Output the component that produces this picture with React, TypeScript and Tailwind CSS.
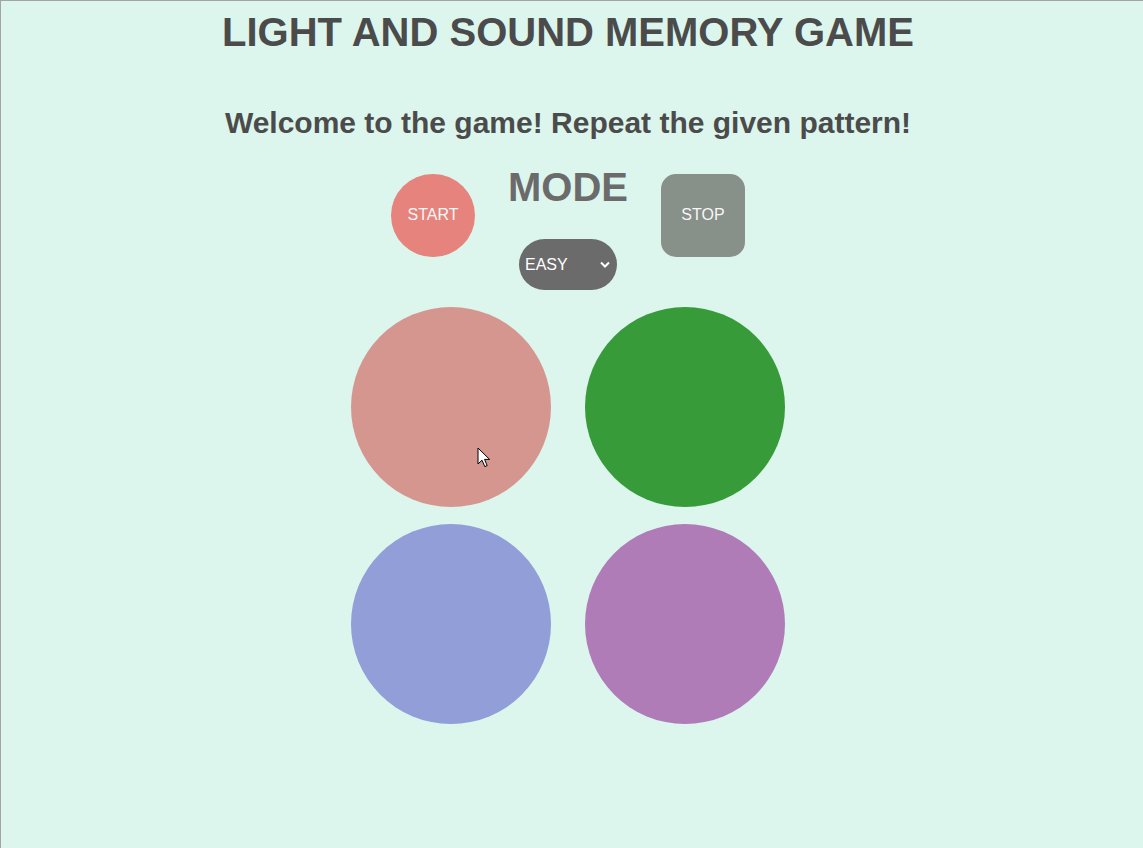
import { useState } from "react";

const pads = [
  { id: 1, color: "bg-[#d69690]" },
  { id: 2, color: "bg-[#379b3a]" },
  { id: 3, color: "bg-[#919ed7]" },
  { id: 4, color: "bg-[#b07cb8]" },
];

function Cursor() {
  return (
    <svg
      className="pointer-events-none absolute left-[476px] top-[446px]"
      width="14"
      height="22"
      viewBox="0 0 14 22"
    >
      <path
        d="M1 1 L1 17 L5 13.2 L7.8 19.6 L10.2 18.6 L7.5 12.4 L12.6 12.4 Z"
        fill="#ffffff"
        stroke="#000000"
        strokeWidth="1"
        strokeLinejoin="round"
      />
    </svg>
  );
}

export default function App() {
  const [mode, setMode] = useState("easy");

  return (
    <div className="relative min-h-[848px] border-l border-t border-[#a3a3a3] bg-[#dcf6ed] font-['Liberation_Sans',Arial,sans-serif]">
      <div className="flex w-[1134px] flex-col items-center pt-2 text-center">
        <h1 className="text-[40px] font-bold leading-[46px] text-[#4b4b4b]">
          LIGHT AND SOUND MEMORY GAME
        </h1>
        <p className="mt-[51px] text-[30px] font-bold leading-[34px] text-[#4b4b4b]">
          Welcome to the game! Repeat the given pattern!
        </p>

        {/* controls */}
        <div className="mt-[24px] flex items-start justify-center gap-[34px]">
          <button className="mt-[10px] flex h-[83px] w-[84px] items-center justify-center rounded-full bg-[#e6837d] pb-[2px] text-base text-[#f7f7f7]">
            START
          </button>
          <div className="flex w-[118px] flex-col items-center">
            <h2 className="text-[40px] font-bold leading-[46px] text-[#6b6b6b]">
              MODE
            </h2>
            <div className="relative mt-[29px]">
              <select
                value={mode}
                onChange={(e) => setMode(e.target.value)}
                className="h-[51px] w-[98px] appearance-none rounded-full bg-[#6b6b6b] pl-[6px] text-left text-base text-white outline-none"
              >
                <option value="easy">EASY</option>
                <option value="medium">MEDIUM</option>
                <option value="hard">HARD</option>
              </select>
              <svg
                className="pointer-events-none absolute right-[6px] top-[21px]"
                width="12"
                height="9"
                viewBox="0 0 12 9"
              >
                <path
                  d="M2 2.5 L6 6.5 L10 2.5"
                  fill="none"
                  stroke="#ffffff"
                  strokeWidth="2"
                />
              </svg>
            </div>
          </div>
          <button className="mt-[10px] flex h-[83px] w-[84px] items-center justify-center rounded-[15px] bg-[#879089] pb-[2px] text-base text-[#f7f7f7]">
            STOP
          </button>
        </div>

        {/* game pads */}
        <div className="mt-[17px] grid grid-cols-2 gap-x-[34px] gap-y-[17px]">
          {pads.map((p) => (
            <button
              key={p.id}
              className={`h-[200px] w-[200px] rounded-full ${p.color}`}
            />
          ))}
        </div>
      </div>
      <Cursor />
    </div>
  );
}
